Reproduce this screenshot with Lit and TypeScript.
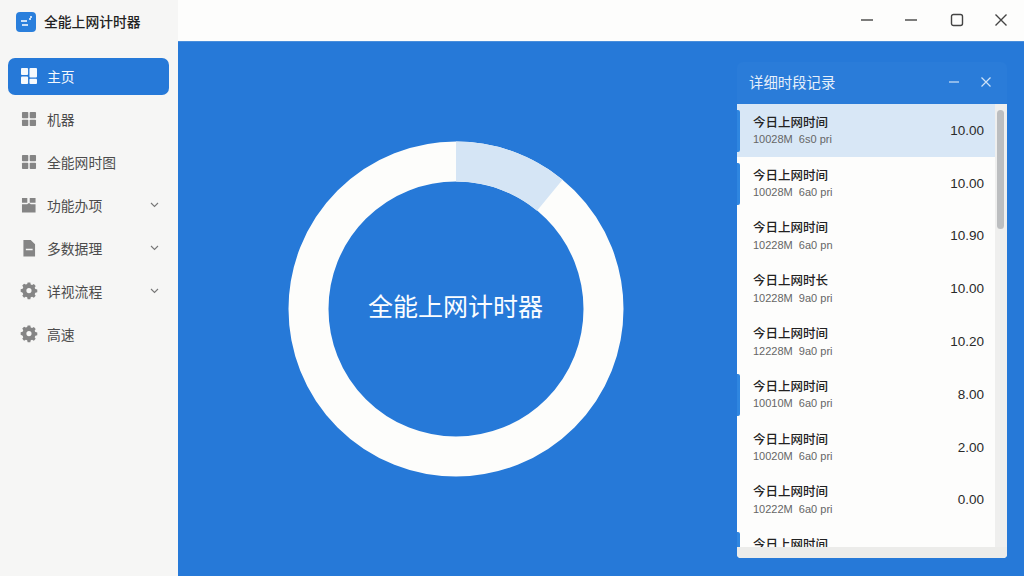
import { LitElement, html, css, svg } from "lit";
import { customElement } from "lit/decorators.js";

const gridIcon = svg`<rect x="1" y="1" width="6.5" height="6.5" rx=".8"/><rect x="9" y="1" width="6.5" height="6.5" rx=".8"/><rect x="1" y="9" width="6.5" height="6.5" rx=".8"/><rect x="9" y="9" width="6.5" height="6.5" rx=".8"/>`;
const dashIcon = svg`<rect x="0" y="0" width="7.5" height="7.5" rx="1"/><rect x="9" y="0" width="8" height="10" rx="1"/><rect x="0" y="9" width="7.5" height="8" rx="1"/><rect x="9" y="11.5" width="8" height="5.5" rx="1"/>`;
const blockIcon = svg`<path d="M1 1h5.500v5H1zM9 1h6v5H9z"/><path d="M1 7.500h5.500l1 -1h1.500l1 1H15V16H1z"/>`;
const fileIcon = svg`<path fill-rule="evenodd" d="M2.500 0h7.500l4.500 4.500V17h-12zM5 9v1.600h7V9z"/>`;
const gearIcon = svg`<path fill-rule="evenodd" d="M7 .5h3l.5 2.200 1.500.7 2-1.100 2 2.100-1.100 1.900.7 1.600 2.200.6v3l-2.200.5-.7 1.600 1.100 1.900-2 2.100-2-1.100-1.500.7-.5 2.200H7l-.5-2.200-1.500-.7-2 1.100-2-2.100 1.100-1.900-.7-1.600L-.8 11V8l2.200-.6.7-1.600L1 3.900l2-2.100 2 1.100 1.500-.7zM8.500 6.700a2.900 2.900 0 1 0 0 5.800 2.900 2.900 0 0 0 0-5.800z" transform="translate(.4 -1) scale(.92)"/>`;

interface Nav { label: string; icon: unknown; active?: boolean; more?: boolean; vb?: string; }
const nav: Nav[] = [
  { label: "主页", icon: dashIcon, active: true, vb: "0 0 17 17" },
  { label: "机器", icon: gridIcon },
  { label: "全能网时图", icon: gridIcon },
  { label: "功能办项", icon: blockIcon, more: true },
  { label: "多数据理", icon: fileIcon, more: true },
  { label: "详视流程", icon: gearIcon, more: true },
  { label: "高速", icon: gearIcon },
];

interface Row { t: string; s: string; v: string; mark?: boolean; sel?: boolean; }
const rows: Row[] = [
  { t: "今日上网时间", s: "10028M  6s0 pri", v: "10.00", mark: true, sel: true },
  { t: "今日上网时间", s: "10028M  6a0 pri", v: "10.00", mark: true },
  { t: "今日上网时间", s: "10228M  6a0 pn", v: "10.90" },
  { t: "今日上网时长", s: "10228M  9a0 pri", v: "10.00" },
  { t: "今日上网时间", s: "12228M  9a0 pri", v: "10.20" },
  { t: "今日上网时间", s: "10010M  6a0 pri", v: "8.00", mark: true },
  { t: "今日上网时间", s: "10020M  6a0 pri", v: "2.00" },
  { t: "今日上网时间", s: "10222M  6a0 pri", v: "0.00" },
  { t: "今日上网时间", s: "10228M  6a0 pri", v: "4.00", mark: true },
];

@customElement("app-root")
export class AppRoot extends LitElement {
  static styles = css`
    :host {
      display: grid;
      grid-template-columns: 178px minmax(0, 1fr);
      grid-template-rows: minmax(0, 1fr);
      width: 1024px;
      height: 576px;
      overflow: hidden;
      font-family: "Noto Sans CJK SC", "Noto Sans", sans-serif;
      background: #fdfdfc;
    }
    .side {
      background: #f6f6f5;
      padding: 0 9px 0 8px;
      display: flex;
      flex-direction: column;
    }
    .brand {
      height: 58px;
      box-sizing: border-box;
      flex: none;
      display: flex;
      align-items: center;
      gap: 8px;
      padding: 0 0 15px 8px;
      font-size: 13.8px;
      font-weight: 500;
      color: #222;
    }
    .brand span { padding-bottom: 2px; }
    .logo { width: 20px; height: 20px; flex: none; display: block; }
    .nav { display: flex; flex-direction: column; gap: 6px; }
    .item {
      height: 37px;
      box-sizing: border-box;
      display: flex;
      align-items: center;
      border-radius: 7px;
      padding: 0 10px 2px 13px;
      gap: 10px;
      font-size: 13.8px;
      color: #4c4c4c;
    }
    .item.active { background: #2679d8; color: #f4f8fd; }
    .item .ico { width: 16px; height: 16px; flex: none; fill: #858585; display: block; overflow: visible; }
    .item.active .ico { fill: #f7fafd; }
    .item .lab { flex: 1; }
    .chev { width: 9px; height: 6px; fill: none; stroke: #777; stroke-width: 1.1; flex: none; }

    .right { display: flex; flex-direction: column; min-width: 0; min-height: 0; }
    .titlebar {
      height: 41px;
      flex: none;
      display: flex;
      justify-content: flex-end;
      align-items: center;
      padding: 0 16px 2px 0;
      box-sizing: border-box;
      gap: 30px;
      background: #fdfdfc;
    }
    .titlebar svg { width: 14px; height: 14px; fill: none; stroke: #444; stroke-width: 1.4; display: block; }
    .titlebar svg.wide { margin-right: 2.5px; }
    .main {
      flex: 1;
      background: #2679d8;
      display: flex;
      min-height: 0;
      border-top: 1px solid #4a8edb;
    }
    .stage {
      flex: 1;
      display: grid;
      place-items: center;
      padding: 0 4px 1px 0;
    }
    .stage > * { grid-area: 1 / 1; }
    .ring { width: 336px; height: 336px; display: block; }
    .ring-title { font-size: 25px; color: #fbfdff; padding-bottom: 8px; }

    .panel {
      width: 270px;
      flex: none;
      margin: 20px 17px 18px 0;
      display: flex;
      flex-direction: column;
      border-radius: 6px;
      background: #2a7cd9;
      min-height: 0;
    }
    .p-head {
      height: 42px;
      box-sizing: border-box;
      flex: none;
      display: flex;
      align-items: center;
      padding: 0 15px 3px 12px;
      color: #e6f0fb;
      font-size: 14.4px;
      gap: 20px;
    }
    .p-head .t { flex: 1; }
    .p-head svg { width: 12px; height: 12px; fill: none; stroke: #cfe2f7; stroke-width: 1.2; display: block; }
    .list {
      flex: 1;
      min-height: 0;
      background: #fdfdfc;
      border-radius: 0 0 4px 4px;
      display: grid;
      grid-template-columns: minmax(0, 1fr) 12px;
      grid-template-rows: minmax(0, 1fr) 11px;
      overflow: hidden;
    }
    .rows { overflow: hidden; min-height: 0; }
    .row {
      position: relative;
      height: 52.8px;
      box-sizing: border-box;
      display: flex;
      align-items: center;
      padding: 0 11px 0 16px;
      background: #fdfdfc;
    }
    .row.sel { background: #d8e7f6; }
    .row.mark::before {
      content: "";
      position: absolute;
      left: 0;
      top: 6px;
      bottom: 5px;
      width: 3px;
      border-radius: 0 2px 2px 0;
      background: #2f86e0;
    }
    .txt { flex: 1; display: flex; flex-direction: column; gap: 1.5px; padding-bottom: 1.5px; }
    .tt { font-size: 12.5px; line-height: 18px; color: #222; font-weight: 500; }
    .ss { font-size: 11px; line-height: 14px; color: #666; font-family: "Liberation Sans", sans-serif; white-space: pre; }
    .val { font-size: 13.5px; color: #2a2a2a; font-family: "Liberation Sans", sans-serif; }
    .track { background: #efefee; padding: 6px 3px 0 2px; }
    .thumb { height: 119px; border-radius: 4px; background: #bcbec0; }
    .foot { grid-column: 1 / 3; background: #ececea; }
  `;

  render() {
    return html`
      <aside class="side">
        <div class="brand">
          <svg class="logo" viewBox="0 0 20 20">
            <rect width="20" height="20" rx="4" fill="#2a7fdc"/>
            <path d="M5 9h6M6 13h6M13 7h2" stroke="#fff" stroke-width="1.3" fill="none"/>
            <circle cx="15" cy="5" r="1" fill="#fff"/>
          </svg>
          <span>全能上网计时器</span>
        </div>
        <nav class="nav">
          ${nav.map(
            (n) => html`<div class="item ${n.active ? "active" : ""}">
              <svg class="ico" viewBox="${n.vb ?? "0 0 16.5 16.5"}">${n.icon}</svg>
              <span class="lab">${n.label}</span>
              ${n.more
                ? html`<svg class="chev" viewBox="0 0 9 6"><path d="M1 1l3.500 3.500L8 1"/></svg>`
                : ""}
            </div>`
          )}
        </nav>
      </aside>
      <div class="right">
        <header class="titlebar">
          <svg viewBox="0 0 14 14"><path d="M1 7h12"/></svg>
          <svg class="wide" viewBox="0 0 14 14"><path d="M1 7h12"/></svg>
          <svg viewBox="0 0 14 14"><rect x="1.500" y="1.500" width="11" height="11" rx="2"/></svg>
          <svg viewBox="0 0 14 14"><path d="M1.500 1.500l11 11M12.500 1.500l-11 11"/></svg>
        </header>
        <main class="main">
          <section class="stage">
            <svg class="ring" viewBox="0 0 336 336">
              <circle cx="168" cy="168" r="147.500" fill="none" stroke="#fdfdfb" stroke-width="40"/>
              <path d="M168 .5A167.500 167.500 0 0 1 274.500 38.700L249 69.800A127.500 127.500 0 0 0 168 40.500z" fill="#d5e5f5"/>
            </svg>
            <div class="ring-title">全能上网计时器</div>
          </section>
          <section class="panel">
            <div class="p-head">
              <span class="t">详细时段记录</span>
              <svg viewBox="0 0 12 12"><path d="M1 6h10"/></svg>
              <svg viewBox="0 0 12 12"><path d="M1.500 1.500l9 9M10.500 1.500l-9 9"/></svg>
            </div>
            <div class="list">
              <div class="rows">
                ${rows.map(
                  (r) => html`<div class="row ${r.sel ? "sel" : ""} ${r.mark ? "mark" : ""}">
                    <div class="txt"><span class="tt">${r.t}</span><span class="ss">${r.s}</span></div>
                    <span class="val">${r.v}</span>
                  </div>`
                )}
              </div>
              <div class="track"><div class="thumb"></div></div>
              <div class="foot"></div>
            </div>
          </section>
        </main>
      </div>
    `;
  }
}
